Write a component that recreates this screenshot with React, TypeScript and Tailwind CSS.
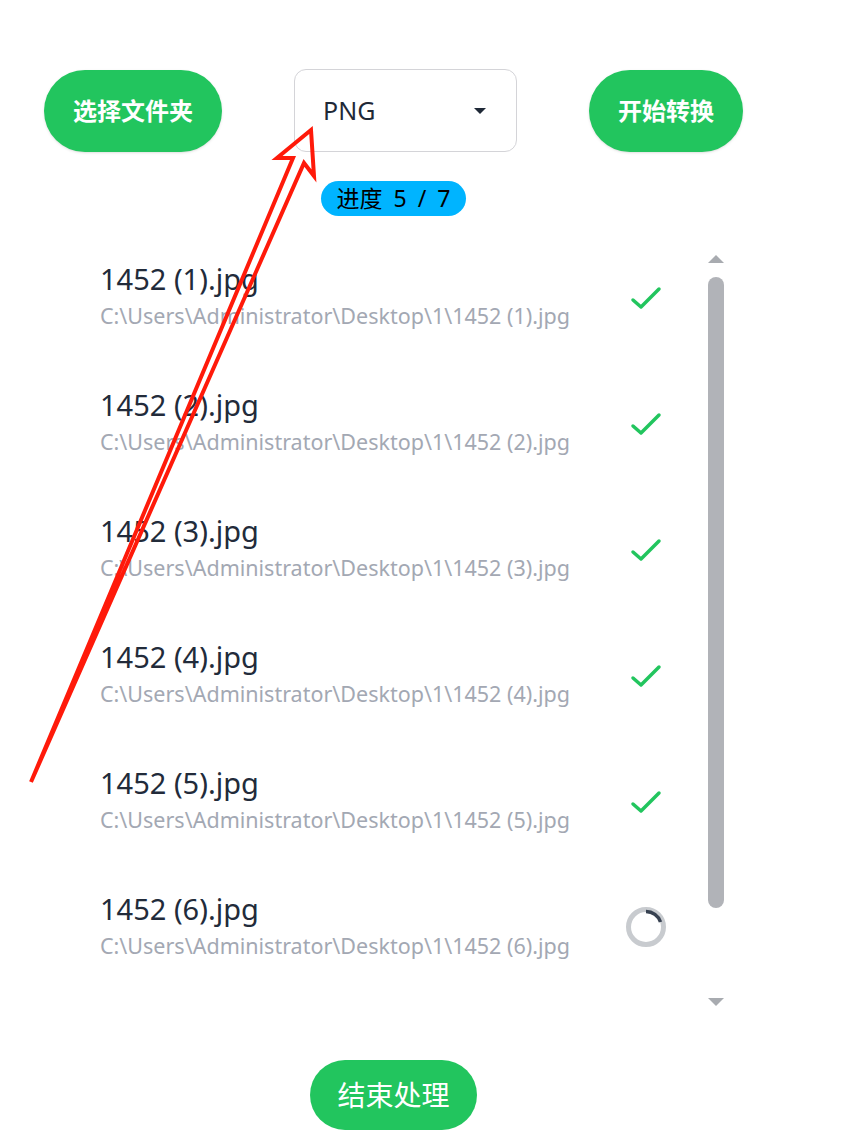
import React from 'react';

const files = [1, 2, 3, 4, 5, 6].map((n) => ({
  name: `1452 (${n}).jpg`,
  path: `C:\\Users\\Administrator\\Desktop\\1\\1452 (${n}).jpg`,
  done: n < 6,
}));

const font = { fontFamily: '"Noto Sans", "Noto Sans CJK SC", sans-serif' };

const CheckIcon: React.FC = () => (
  <svg width="42" height="42" viewBox="0 0 42 42" fill="none">
    <polyline points="8,24 16,31 34,13" stroke="#22c55e" strokeWidth="3.5" strokeLinecap="round" strokeLinejoin="round" />
  </svg>
);

const Spinner: React.FC = () => (
  <svg width="42" height="42" viewBox="0 0 42 42" fill="none">
    <circle cx="21" cy="21" r="17.5" stroke="#c8cbcf" strokeWidth="5" />
    <path d="M21 5.5 A15.5 15.5 0 0 1 35.5 16" stroke="#374151" strokeWidth="3.5" strokeLinecap="butt" />
  </svg>
);

export default function App() {
  return (
    <div className="relative w-[844px] h-[1148px] bg-white overflow-hidden" style={font}>
      <div className="ml-[44px] w-[699px] flex flex-col items-center pt-[69px]">
        {/* toolbar */}
        <div className="w-full flex items-center gap-[72px]">
          <button className="w-[178px] h-[82px] rounded-full bg-[#22c55e] text-white text-[24px] font-bold shadow-sm">
            选择文件夹
          </button>
          <div className="w-[223px] h-[83px] rounded-xl border border-[#d4d4d8] flex items-center justify-between pl-[28px] pr-[30px]">
            <span className="text-[25px] text-[#1f2937]">PNG</span>
            <svg width="12" height="6" viewBox="0 0 12 6">
              <polygon points="0,0 12,0 6,6" fill="#1f2937" />
            </svg>
          </div>
          <button className="w-[154px] h-[82px] rounded-full bg-[#22c55e] text-white text-[24px] font-bold shadow-sm">
            开始转换
          </button>
        </div>

        {/* progress */}
        <div className="mt-[29px] h-[35px] px-[16px] rounded-full bg-[#00b4ff] text-black text-[23px] leading-[35px] [word-spacing:5px]">
          进度 5 / 7
        </div>

        {/* file list */}
        <div className="mt-[18px] w-full h-[780px] flex">
          <div className="flex-1 flex flex-col">
            {files.map((f) => (
              <div key={f.name} className="h-[126px] flex items-center pl-[56px] pr-[41px]">
                <div className="flex-1 flex flex-col mb-[4px]">
                  <span className="text-[29px] leading-[36px] text-[#222b3a]">{f.name}</span>
                  <span className="mt-[5px] text-[21.5px] leading-[28px] text-[#a3a8b3]">{f.path}</span>
                </div>
                <div className="w-[42px] h-[42px] flex items-center justify-center">
                  {f.done ? <CheckIcon /> : <Spinner />}
                </div>
              </div>
            ))}
          </div>
          {/* scrollbar */}
          <div className="w-[16px] mr-[19px] flex flex-col items-center pt-[21px] pb-[8px]">
            <svg width="16" height="8" viewBox="0 0 16 8">
              <polygon points="0,8 16,8 8,0" fill="#a8abb0" />
            </svg>
            <div className="mt-[14px] w-[16px] h-[631px] rounded-full bg-[#b1b3b8]" />
            <div className="flex-1" />
            <svg width="16" height="8" viewBox="0 0 16 8">
              <polygon points="0,0 16,0 8,8" fill="#a8abb0" />
            </svg>
          </div>
        </div>

        <button className="mt-[46px] w-[167px] h-[70px] rounded-full bg-[#22c55e] text-white text-[28px]">
          结束处理
        </button>
      </div>

      {/* annotation arrow */}
      <svg className="absolute inset-0 pointer-events-none" width="844" height="1148" viewBox="0 0 844 1148" fill="none">
        <polygon
          points="31,782 293,158 277,158 311,130 314,176 304,163"
          stroke="#ff1a0a"
          strokeWidth="4"
          strokeLinejoin="miter"
          strokeLinecap="round"
        />
      </svg>
    </div>
  );
}
